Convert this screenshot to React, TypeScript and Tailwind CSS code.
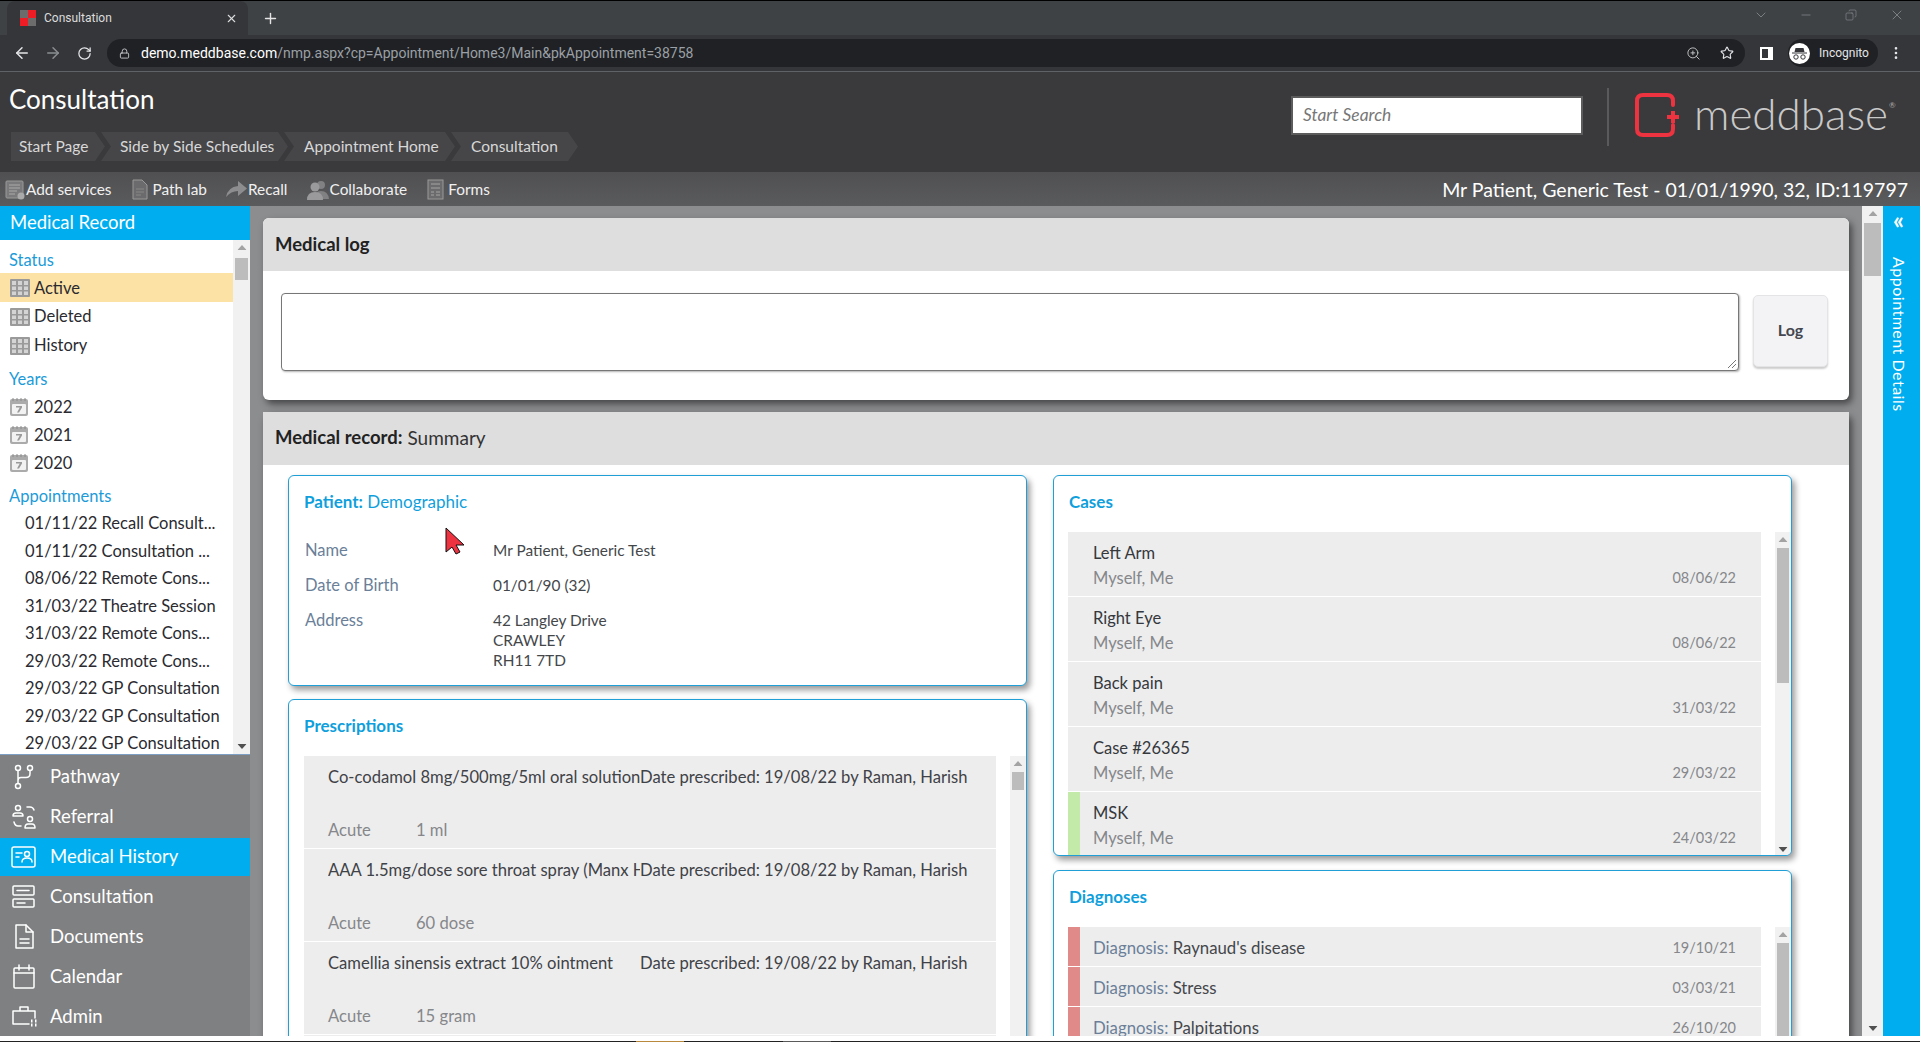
import React from 'react';
import { ArrowLeft, ArrowRight, RotateCw, Lock, ZoomIn, Star, X, Plus, ChevronDown, Minus, Copy, MoreVertical } from 'lucide-react';

const appointments = [
  '01/11/22 Recall Consult...',
  '01/11/22 Consultation ...',
  '08/06/22 Remote Cons...',
  '31/03/22 Theatre Session',
  '31/03/22 Remote Cons...',
  '29/03/22 Remote Cons...',
  '29/03/22 GP Consultation',
  '29/03/22 GP Consultation',
  '29/03/22 GP Consultation',
];

const prescriptions = [
  { name: 'Co-codamol 8mg/500mg/5ml oral solution', qty: '1 ml' },
  { name: 'AAA 1.5mg/dose sore throat spray (Manx Healthcare Ltd)', qty: '60 dose' },
  { name: 'Camellia sinensis extract 10% ointment', qty: '15 gram' },
];

const cases = [
  { name: 'Left Arm', date: '08/06/22' },
  { name: 'Right Eye', date: '08/06/22' },
  { name: 'Back pain', date: '31/03/22' },
  { name: 'Case #26365', date: '29/03/22' },
  { name: 'MSK', date: '24/03/22', green: true },
];

const diagnoses = [
  { name: "Raynaud's disease", date: '19/10/21' },
  { name: 'Stress', date: '03/03/21' },
  { name: 'Palpitations', date: '26/10/20' },
];

function GridIcon() {
  return (
    <svg width="20" height="18" viewBox="0 0 20 18" className="shrink-0">
      <rect width="20" height="18" rx="1" fill="#9a9a9a" />
      <path d="M2 2h4v4H2zM8 2h4v4H8zM14 2h4v4h-4zM2 7.500h4v3.500H2zM8 7.500h4v3.500H8zM14 7.500h4v3.500h-4zM2 12.500h4v3.500H2zM8 12.500h4v3.500H8zM14 12.500h4v3.500h-4z" fill="#d4d4d4" />
    </svg>
  );
}

function CalIcon() {
  return (
    <svg width="20" height="20" viewBox="0 0 20 20" className="shrink-0">
      <path d="M1 4q0-2 2-2h14q2 0 2 2v13q0 2-2 2H3q-2 0-2-2z" fill="#ababab" />
      <rect x="3" y="7" width="14" height="10" rx="1" fill="#f2f2f2" />
      <path d="M7 9h6v1.600l-3 5H8l2.800-5H7z" fill="#9a9a9a" />
      <path d="M4 1v3M8 1v3M12 1v3M16 1v3" stroke="#8a8a8a" strokeWidth="1" />
    </svg>
  );
}

function ScrollBar({ width, thumbTop, thumbH, down = false, cls = '' }: { width: string; thumbTop: string; thumbH: string; down?: boolean; cls?: string }) {
  return (
    <div className={`relative shrink-0 bg-[#f1f1f1] ${width} ${cls}`}>
      <svg width="9" height="5" viewBox="0 0 9 5" className="absolute top-[5px] left-1/2 -translate-x-1/2"><path d="M0 5L4.500 0 9 5z" fill="#a3a3a3" /></svg>
      <div className={`absolute left-[2px] right-[2px] bg-[#bcbcbc] ${thumbTop} ${thumbH}`} />
      {down && <svg width="9" height="5" viewBox="0 0 9 5" className="absolute bottom-[5px] left-1/2 -translate-x-1/2"><path d="M0 0L4.500 5 9 0z" fill="#505050" /></svg>}
    </div>
  );
}

const navStroke = { fill: 'none', stroke: 'white', strokeWidth: 1.5, strokeLinecap: 'round' as const, strokeLinejoin: 'round' as const };

function NavRow({ label, active, children }: { label: string; active?: boolean; children: React.ReactNode }) {
  return (
    <div className={`flex items-center h-[38px] mb-[2px] ${active ? 'bg-[#00aeef]' : ''}`}>
      <svg width="26" height="26" viewBox="0 0 26 26" className="ml-[11px] mr-[13px] shrink-0" {...navStroke}>{children}</svg>
      <span className="text-[18.5px] text-white">{label}</span>
    </div>
  );
}

function Box({ title, children, cls = '' }: { title: React.ReactNode; children: React.ReactNode; cls?: string }) {
  return (
    <div className={`bg-white border border-[#1f9fd6] rounded-[6px] shadow-[3px_4px_6px_rgba(0,0,0,0.4)] ${cls}`}>
      <div className="pl-[15px] pt-[14px] pb-[2px] text-[17px] text-[#0f9fdc] leading-[24px]">{title}</div>
      {children}
    </div>
  );
}

export default function App() {
  return (
    <div className="w-[1920px] h-[1042px] overflow-hidden flex flex-col bg-white [font-family:Lato,sans-serif] relative">
      {/* browser tabs */}
      <div className="h-[35px] shrink-0 bg-[#3f4245] border-t border-black flex items-end relative [font-family:Roboto,sans-serif]">
        <div className="ml-[7px] w-[241px] h-[34px] bg-[#35363a] rounded-t-lg flex items-center pl-[13px] text-white">
          <div className="grid grid-cols-2 w-[16px] h-[16px]">
            <span className="bg-[#6c6c6c]" /><span className="bg-[#ee1c25]" /><span className="bg-[#ee1c25]" /><span className="bg-[#6c6c6c]" />
          </div>
          <span className="ml-[8px] text-[12px] text-[#dcdcdc]">Consultation</span>
          <X size={13} className="ml-auto mr-[10px] text-[#dcdcdc]" />
        </div>
        <Plus size={17} className="ml-[14px] mb-[8px] text-[#e4e4e4]" />
        <div className="ml-auto flex items-center mb-[12px] text-[#9a9da0]">
          <ChevronDown size={16} strokeWidth={1} className="mr-[30px]" />
          <Minus size={14} strokeWidth={1} className="mr-[32px]" />
          <Copy size={12} strokeWidth={1} className="mr-[32px] -scale-x-100" />
          <X size={16} strokeWidth={1} className="mr-[15px]" />
        </div>
      </div>
      {/* address bar */}
      <div className="h-[37px] shrink-0 bg-[#35363a] border-b border-[#5f6368] flex items-center text-[#e4e6e8] [font-family:Roboto,sans-serif]">
        <ArrowLeft size={18} className="ml-[13px]" />
        <ArrowRight size={18} className="ml-[13px] text-[#8b8e91]" />
        <RotateCw size={15} className="ml-[15px]" />
        <div className="ml-[15px] w-[1638px] h-[28px] rounded-full bg-[#202124] flex items-center pl-[12px] text-[14px]">
          <Lock size={11} className="text-[#c4c7c9]" />
          <span className="ml-[11px] text-white">demo.meddbase.com</span>
          <span className="text-[#9aa0a6]">/nmp.aspx?cp=Appointment/Home3/Main&amp;pkAppointment=38758</span>
          <ZoomIn size={15} strokeWidth={1.5} className="ml-auto text-[#c4c7c9]" />
          <Star size={14} className="ml-[19px] mr-[11px] text-[#dfe1e3]" />
        </div>
        <div className="ml-[15px] w-[13px] h-[13px] border-2 border-white border-r-[5px]" />
        <div className="ml-[15px] w-[90px] h-[28px] rounded-full bg-[#202124] flex items-center pl-[1px]">
          <div className="w-[21px] h-[21px] rounded-full bg-white flex items-center justify-center">
            <svg width="15" height="13" viewBox="0 0 15 13"><path d="M3.500 1h8l1 4h-10zM0 5.500h15v1H0z" fill="#35363a" /><circle cx="4" cy="10" r="2.200" fill="none" stroke="#35363a" /><circle cx="11" cy="10" r="2.200" fill="none" stroke="#35363a" /></svg>
          </div>
          <span className="ml-[9px] text-[12px]">Incognito</span>
        </div>
        <MoreVertical size={16} className="ml-[10px]" />
      </div>
      {/* app header */}
      <div className="h-[100px] shrink-0 bg-[#3a3a3c] flex relative">
        <div className="flex-1">
          <div className="pl-[9px] pt-[10px] text-[26px] leading-[34px] text-white">Consultation</div>
          <div className="mt-[16px] ml-[11px] flex h-[29px] text-[15.5px] text-[#d8d8d8]">
            <div className="w-[94px] pl-[8px] flex items-center bg-[#464648] [clip-path:polygon(0_0,84px_0,100%_50%,84px_100%,0_100%)]">Start Page</div>
            <div className="w-[187px] -ml-[4px] pl-[19px] flex items-center bg-[#464648] [clip-path:polygon(0_0,177px_0,100%_50%,177px_100%,0_100%,10px_50%)]">Side by Side Schedules</div>
            <div className="w-[171px] -ml-[4px] pl-[20px] flex items-center bg-[#464648] [clip-path:polygon(0_0,161px_0,100%_50%,161px_100%,0_100%,10px_50%)]">Appointment Home</div>
            <div className="w-[127px] -ml-[4px] pl-[20px] flex items-center bg-[#464648] [clip-path:polygon(0_0,117px_0,100%_50%,117px_100%,0_100%,10px_50%)]">Consultation</div>
          </div>
        </div>
        <div className="w-[292px] h-[39px] mt-[24px] bg-white border-2 border-[#5c5c5c] flex items-center pl-[10px] text-[17.4px] italic text-[#777]">Start Search</div>
        <div className="w-[2px] h-[58px] mt-[16px] ml-[24px] bg-[#5a5a5c]" />
        <div className="flex items-start w-[311px] shrink-0 pl-[25px] pt-[21px]">
          <svg width="48" height="44" viewBox="0 0 48 44" className="shrink-0">
            <path d="M39 12V8q0-6-6-6H9Q3 2 3 8v28q0 6 6 6h24q6 0 6-6v-4" fill="none" stroke="#ed3340" strokeWidth="4" strokeLinecap="round" />
            <path d="M37 18h4v4h4v4h-4v4h-4v-4h-4v-4h4z" fill="#ed3340" />
          </svg>
          <span className="ml-[12px] text-[44px] leading-[40px] font-light text-[#c9c9c9]">meddbase</span>
          <span className="text-[8px] text-[#aaa] mt-[6px] ml-[1px]">®</span>
        </div>
      </div>
      {/* toolbar */}
      <div className="h-[34px] shrink-0 pt-px bg-linear-to-b from-[#505052] to-[#5a5b5d] flex items-center text-[15.4px] text-[#f0f0f0]">
        <svg width="20" height="20" viewBox="0 0 20 20" className="ml-[5px]"><rect x="1" y="1" width="17" height="17" rx="1" fill="#7a7a7c" stroke="#999" /><path d="M4 5h11M4 8h11M4 11h8M4 14h6" stroke="#aaa" /><circle cx="16" cy="16" r="3.500" fill="#aaa" /></svg>
        <span className="ml-px">Add services</span>
        <svg width="16" height="21" viewBox="0 0 16 21" className="ml-[21px]"><path d="M1 1h9l5 5v14H1z" fill="#6b6b6d" stroke="#999" /><path d="M4 10h8M4 13h8M4 16h5" stroke="#888" /></svg>
        <span className="ml-[4px]">Path lab</span>
        <svg width="21" height="17" viewBox="0 0 21 17" className="ml-[19px]"><path d="M0 16Q2 6 12 5V0l9 7.500-9 7.500V10q-7 0-12 6z" fill="#8d8d8f" /></svg>
        <span className="ml-px">Recall</span>
        <svg width="22" height="20" viewBox="0 0 22 20" className="ml-[19px]"><circle cx="14" cy="5" r="4" fill="#818183" /><path d="M7 19q0-8 7-8t8 8z" fill="#818183" /><circle cx="8" cy="7" r="4.500" fill="#9a9a9c" /><path d="M0 20q0-8 8-8t8 8z" fill="#9a9a9c" /></svg>
        <span className="ml-px">Collaborate</span>
        <svg width="17" height="21" viewBox="0 0 17 21" className="ml-[20px]"><rect x="1" y="1" width="15" height="19" fill="#6b6b6d" stroke="#999" /><path d="M4 5h9M4 9h9M4 13h3M9 13h4M4 16h3M9 16h4" stroke="#a5a5a5" /></svg>
        <span className="ml-[4px]">Forms</span>
        <span className="ml-auto mr-[12px] text-[19.5px] text-white">Mr Patient, Generic Test - 01/01/1990, 32, ID:119797</span>
      </div>
      {/* body */}
      <div className="h-[830px] shrink-0 flex bg-[#8c8d8f]">
        {/* left sidebar */}
        <div className="w-[250px] shrink-0 flex flex-col text-[16.5px]">
          <div className="h-[34px] shrink-0 bg-[#00aeef] pl-[10px] flex items-center text-[18.5px] text-white">Medical Record</div>
          <div className="h-[515px] shrink-0 flex bg-white border-b border-[#7d9fc4]">
            <div className="w-[233px] overflow-hidden text-[#2a2a30]">
              <div className="pl-[9px] pt-[8px] h-[33px] text-[#1c9bd8]">Status</div>
              <div className="flex items-center h-[29px] pt-px bg-[#fde2a6] pl-[10px]"><GridIcon /><span className="ml-[4px]">Active</span></div>
              <div className="flex items-center h-[29px] pl-[10px]"><GridIcon /><span className="ml-[4px]">Deleted</span></div>
              <div className="flex items-center h-[29px] pl-[10px]"><GridIcon /><span className="ml-[4px]">History</span></div>
              <div className="pl-[9px] pt-[7px] h-[33px] text-[#1c9bd8]">Years</div>
              {['2022', '2021', '2020'].map((y) => (
                <div key={y} className="flex items-center h-[28px] pl-[9px]"><CalIcon /><span className="ml-[5px]">{y}</span></div>
              ))}
              <div className="pl-[9px] pt-[7px] h-[34px] text-[#1c9bd8]">Appointments</div>
              {appointments.map((a, i) => (
                <div key={i} className="h-[27.5px] pl-[25px] whitespace-nowrap leading-[24px]">{a}</div>
              ))}
            </div>
            <ScrollBar width="w-[17px]" thumbTop="top-[18px]" thumbH="h-[22px]" down />
          </div>
          <div className="flex-1 overflow-hidden bg-[#7f8082] pt-[3px]">
            <NavRow label="Pathway">
              <circle cx="7" cy="4" r="2.500" /><circle cx="19" cy="4" r="2.500" /><circle cx="7" cy="22" r="2.500" />
              <path d="M7 6.500v13M19 6.500v3q0 4-4 4H10q-3 0-3 3" />
            </NavRow>
            <NavRow label="Referral">
              <circle cx="7" cy="4" r="2.500" /><path d="M2 12q0-3 3-3h4q3 0 3 3z" /><circle cx="19" cy="15" r="2.500" /><path d="M14 24q0-4 3-4h4q3 0 3 4z" />
              <path d="M16 3h3q3 0 4 3M10 22H7q-3 0-4-4" />
            </NavRow>
            <NavRow label="Medical History" active>
              <rect x="1" y="3" width="23" height="20" rx="2" /><path d="M5 9h6M5 13h3" /><circle cx="16" cy="10" r="2.500" /><path d="M11 18q0-4 5-4t5 4" />
            </NavRow>
            <NavRow label="Consultation">
              <rect x="2" y="2" width="21" height="9" rx="1" /><rect x="2" y="15" width="21" height="8" rx="1" /><path d="M6 6.500h12M6 19h8" />
            </NavRow>
            <NavRow label="Documents">
              <path d="M5 1h10l7 7v16H5z" /><path d="M15 1v7h7M9 15h9M9 19h9" />
            </NavRow>
            <NavRow label="Calendar">
              <rect x="3" y="4" width="20" height="20" rx="1" /><path d="M3 9h20M8 1v5M18 1v5" />
            </NavRow>
            <NavRow label="Admin">
              <path d="M18 20H2V7h22v7M9 7V3h8v4" /><path d="M20 17h1.500M24 17h1.500M20 21h1.500M24 21h1.500" strokeWidth="3" strokeLinecap="butt" />
            </NavRow>
          </div>
        </div>
        {/* main content */}
        <div className="w-[1612px] shrink-0 pl-[13px] pt-[12px] overflow-hidden relative">
          <div className="w-[1586px] h-[182px] rounded-[6px] bg-white shadow-[3px_4px_7px_rgba(0,0,0,0.5)] overflow-hidden">
            <div className="h-[53px] bg-[#dededf] flex items-center pl-[12px] text-[18.5px] font-bold text-[#222]">Medical log</div>
            <div className="flex pl-[18px] pt-[22px]">
              <div className="relative w-[1458px] h-[78px] rounded-[4px] border border-[#777] bg-white shadow-[1px_1px_2px_rgba(0,0,0,0.3)]">
                <svg width="10" height="10" viewBox="0 0 10 10" className="absolute right-[1px] bottom-[1px]"><path d="M1 9l8-8M5 9l4-4" stroke="#777" /></svg>
              </div>
              <div className="ml-[14px] mt-[2px] w-[75px] h-[72px] pb-[3px] rounded-[5px] bg-[#f3f3f5] border border-[#e4e4e6] shadow-[0_2px_2px_rgba(0,0,0,0.2)] flex items-center justify-center text-[16px] font-bold text-[#44474f]">Log</div>
            </div>
          </div>
          <div className="mt-[12px] w-[1586px] h-[700px] rounded-t-[6px] bg-white shadow-[3px_4px_7px_rgba(0,0,0,0.5)]">
            <div className="h-[53px] pb-[1px] bg-[#dededf] flex items-center pl-[12px] text-[19px] text-[#333]"><b className="text-[#222] mr-[5px] text-[18.5px]">Medical record:</b>Summary</div>
            <div className="flex pl-[25px] pt-[10px] gap-[26px] h-[571px] overflow-hidden">
              <div className="w-[739px] shrink-0">
                <Box title={<><b>Patient:</b> Demographic</>} cls="h-[211px]">
                  <div className="pl-[16px] pt-[17px] text-[15.4px] text-[#44474a]">
                    <div className="flex h-[35px] items-center"><span className="w-[188px] text-[16.5px] text-[#6b7f99]">Name</span><span>Mr Patient, Generic Test</span></div>
                    <div className="flex h-[35px] items-center"><span className="w-[188px] text-[16.5px] text-[#6b7f99]">Date of Birth</span><span>01/01/90 (32)</span></div>
                    <div className="flex pt-[7px] leading-[20px]"><span className="w-[188px] text-[16.5px] text-[#6b7f99]">Address</span><span>42 Langley Drive<br />CRAWLEY<br />RH11 7TD</span></div>
                  </div>
                </Box>
                <Box title={<b>Prescriptions</b>} cls="mt-[13px] h-[420px]">
                  <div className="flex mt-[16px] pl-[15px] h-[330px]">
                    <div className="w-[692px] shrink-0">
                      {prescriptions.map((p) => (
                        <div key={p.name} className="h-[92px] mb-px bg-[#ededee] pl-[24px] pt-[8px] text-[16.6px] text-[#3f4246] relative">
                          <div className="flex h-[26px] items-center">
                            <span className="w-[312px] shrink-0 whitespace-nowrap overflow-hidden">{p.name}</span>
                            <span className="whitespace-nowrap">Date prescribed: 19/08/22 by Raman, Harish</span>
                          </div>
                          <div className="flex mt-[28px] text-[#85878a]"><span className="w-[88px]">Acute</span><span>{p.qty}</span></div>
                        </div>
                      ))}
                      <div className="h-[3px] bg-[#ededee]" />
                    </div>
                    <ScrollBar width="w-[16px]" thumbTop="top-[16px]" thumbH="h-[18px]" cls="ml-[14px] h-[300px]" />
                  </div>
                </Box>
              </div>
              <div className="w-[739px] shrink-0">
                <Box title={<b>Cases</b>} cls="h-[381px] overflow-hidden">
                  <div className="flex mt-[16px] pl-[14px] h-[325px]">
                    <div className="w-[693px] shrink-0">
                      {cases.map((c) => (
                        <div key={c.name} className="h-[64px] mb-px bg-[#ededee] flex text-[16.5px]">
                          <div className={`w-[12px] shrink-0 ${c.green ? 'bg-[#c3eaa8]' : ''}`} />
                          <div className="flex-1 pl-[13px] pr-[25px] pt-[9px]">
                            <div className="text-[#35383c] leading-[24px]">{c.name}</div>
                            <div className="flex justify-between items-center text-[#85878a] leading-[24px] mt-px"><span>Myself, Me</span><span className="text-[14.5px]">{c.date}</span></div>
                          </div>
                        </div>
                      ))}
                    </div>
                    <ScrollBar width="w-[16px]" thumbTop="top-[16px]" thumbH="h-[135px]" cls="ml-[14px]" down />
                  </div>
                </Box>
                <Box title={<b>Diagnoses</b>} cls="mt-[14px] h-[200px] overflow-hidden">
                  <div className="flex mt-[16px] pl-[14px] h-[125px]">
                    <div className="w-[693px] shrink-0">
                      {diagnoses.map((d) => (
                        <div key={d.name} className="h-[39px] mb-px bg-[#ededee] flex items-center text-[16.8px]">
                          <div className="w-[12px] h-full shrink-0 bg-[#e08a8a]" />
                          <div className="flex-1 pl-[13px] pr-[25px] pt-[2px] flex justify-between items-center text-[#85878a]">
                            <span><span className="text-[#6b7f99]">Diagnosis: </span><span className="text-[#44474a]">{d.name}</span></span>
                            <span className="text-[14.5px]">{d.date}</span>
                          </div>
                        </div>
                      ))}
                    </div>
                    <ScrollBar width="w-[16px]" thumbTop="top-[16px]" thumbH="h-[135px]" cls="ml-[14px]" />
                  </div>
                </Box>
              </div>
            </div>
          </div>
          {/* red pointer from the screen recording */}
          <svg width="20" height="28" viewBox="0 0 20 28" className="absolute left-[195px] top-[321px]"><path d="M1 1v24l6-5 4 7 4-2-4-7h8z" fill="#ed3340" stroke="#111" strokeWidth="1" /></svg>
        </div>
        <ScrollBar width="w-[21px]" thumbTop="top-[17px]" thumbH="h-[53px]" down />
        {/* appointment details rail */}
        <div className="w-[37px] shrink-0 bg-[#00aeef] flex flex-col items-center pr-[6px] text-white">
          <span className="mt-[2px] h-[30px] text-[24px] leading-[24px] font-bold">«</span>
          <span className="mt-[19px] [writing-mode:vertical-rl] text-[16px] tracking-[0.5px]">Appointment Details</span>
        </div>
      </div>
      <div className="h-[5px] shrink-0 bg-white" />
      <div className="h-px shrink-0 bg-[#222] relative">
        <div className="absolute left-[636px] w-[48px] h-full bg-[#b98a3e]" />
        <div className="absolute left-[783px] w-[48px] h-full bg-[#5a5a5a]" />
      </div>
    </div>
  );
}
